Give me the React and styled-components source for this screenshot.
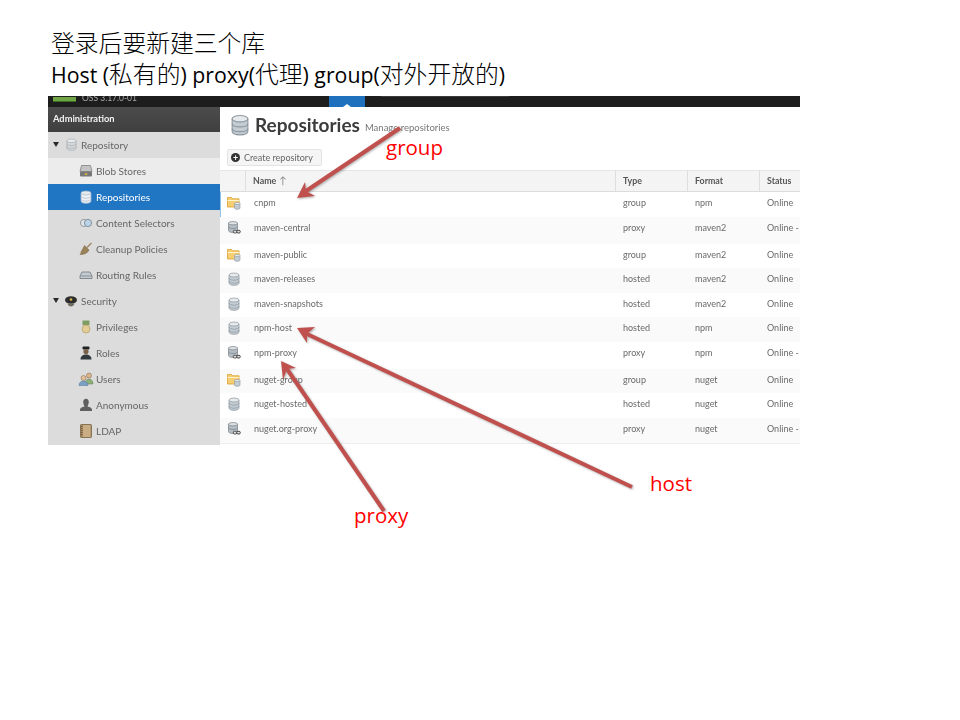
import React from "react";
import styled, { createGlobalStyle } from "styled-components";

const GlobalStyle = createGlobalStyle`
  html, body {
    margin: 0;
    padding: 0;
    background: #fff;
  }
`;

const sideItems = [
  { label: "Repository", icon: "db", group: true },
  { label: "Blob Stores", icon: "blob", tone: "light" },
  { label: "Repositories", icon: "dbWhite", tone: "active" },
  { label: "Content Selectors", icon: "selector" },
  { label: "Cleanup Policies", icon: "broom" },
  { label: "Routing Rules", icon: "routing" },
  { label: "Security", icon: "hat", group: true },
  { label: "Privileges", icon: "medal" },
  { label: "Roles", icon: "officer" },
  { label: "Users", icon: "users" },
  { label: "Anonymous", icon: "person" },
  { label: "LDAP", icon: "book" },
];

const repos = [
  { name: "cnpm", type: "group", format: "npm", status: "Online", h: 25, selected: true },
  { name: "maven-central", type: "proxy", format: "maven2", status: "Online - Remote Available", h: 27 },
  { name: "maven-public", type: "group", format: "maven2", status: "Online", h: 24 },
  { name: "maven-releases", type: "hosted", format: "maven2", status: "Online", h: 25 },
  { name: "maven-snapshots", type: "hosted", format: "maven2", status: "Online", h: 24 },
  { name: "npm-host", type: "hosted", format: "npm", status: "Online", h: 25 },
  { name: "npm-proxy", type: "proxy", format: "npm", status: "Online - Remote Available", h: 27 },
  { name: "nuget-group", type: "group", format: "nuget", status: "Online", h: 24 },
  { name: "nuget-hosted", type: "hosted", format: "nuget", status: "Online", h: 25 },
  { name: "nuget.org-proxy", type: "proxy", format: "nuget", status: "Online - Remote Available", h: 26 },
];

// shaft start, then the stealth head: tip, wing, notch, wing
const arrows = [
  { from: "400,128", to: "306,191", head: "297,198 315,196 306,191 305,182" },
  { from: "632,487", to: "307,334", head: "297,328 315,327 307,334 307,343" },
  { from: "384,511", to: "287,369", head: "281,361 296,368 287,369 283,380" },
];

const Cylinder = ({ size = 14, fill = "#c3ccd3", line = "#8d979f" }) => (
  <svg width={size} height={size} viewBox="0 0 14 14">
    <path d="M2 3v8c0 1.4 2.2 2.3 5 2.3s5-.9 5-2.3V3z" fill={fill} stroke={line} strokeWidth=".7" />
    <ellipse cx="7" cy="3" rx="5" ry="2" fill="#e6eaed" stroke={line} strokeWidth=".7" />
    <path d="M2 6c0 1.3 2.2 2.2 5 2.2s5-.9 5-2.200M2 9c0 1.3 2.2 2.2 5 2.2s5-.9 5-2.200" fill="none" stroke={line} strokeWidth=".7" />
  </svg>
);

const FolderDb = () => (
  <svg width="14" height="14" viewBox="0 0 14 14">
    <path d="M.5 1.500h4l1 1.300h6.500v8.200H.5z" fill="#f6cf72" stroke="#d9a02f" strokeWidth=".8" />
    <path d="M.5 4.500h11.500" stroke="#fff3cf" strokeWidth="1" />
    <path d="M7.500 7.500v4.500c0 .8 1 1.300 2.700 1.300s2.800-.5 2.800-1.300V7.500z" fill="#c3ccd3" stroke="#8d979f" strokeWidth=".6" />
    <ellipse cx="10.250" cy="7.500" rx="2.750" ry="1.100" fill="#e6eaed" stroke="#8d979f" strokeWidth=".6" />
  </svg>
);

const ProxyDb = () => (
  <svg width="14" height="14" viewBox="0 0 14 14">
    <path d="M1.500 2v7.500c0 1.200 1.800 2 4.500 2s4.500-.8 4.500-2V2z" fill="#b4bdc4" stroke="#7a838a" strokeWidth=".7" />
    <ellipse cx="6" cy="2.200" rx="4.500" ry="1.700" fill="#dde1e4" stroke="#7a838a" strokeWidth=".7" />
    <path d="M1.500 5.500c0 1.200 1.800 2 4.500 2s4.500-.8 4.500-2" fill="none" stroke="#7a838a" strokeWidth=".7" />
    <rect x="6.300" y="9.300" width="3.500" height="2.700" rx="1.200" fill="#ddd" stroke="#3c3c3c" strokeWidth=".9" />
    <rect x="9.800" y="9.300" width="3.500" height="2.700" rx="1.200" fill="#ddd" stroke="#3c3c3c" strokeWidth=".9" />
  </svg>
);

const SideGlyph = ({ kind }) => {
  switch (kind) {
    case "db":
      return <Cylinder size={13} fill="#d5d8da" line="#a5aaae" />;
    case "dbWhite":
      return <Cylinder size={14} fill="#f0f2f4" line="#9fb6cd" />;
    case "blob":
      return (
        <svg width="14" height="14" viewBox="0 0 14 14">
          <path d="M2.500 1.500h9l1.500 6H1z" fill="#c4c4c4" stroke="#777" strokeWidth=".7" />
          <rect x="1" y="7.500" width="12" height="5" rx="1" fill="#777" />
          <rect x="5.800" y="9.300" width="2.500" height="1.600" fill="#e7b53c" />
        </svg>
      );
    case "selector":
      return (
        <svg width="14" height="14" viewBox="0 0 14 14">
          <circle cx="5" cy="7" r="3.600" fill="#dfe3e6" stroke="#8e969c" strokeWidth=".9" />
          <circle cx="9" cy="7" r="3.600" fill="#bcd3e8" stroke="#7a8a98" strokeWidth=".9" />
        </svg>
      );
    case "broom":
      return (
        <svg width="14" height="14" viewBox="0 0 14 14">
          <path d="M8 5.500 12.500 1" stroke="#a08a66" strokeWidth="1.500" />
          <path d="M5.500 3.500 10 8c-1 2.500-4 4.500-9 4.500 1.500-1 .5-2 1.500-3.500C3.500 7.500 4.500 5.500 5.500 3.500z" fill="#9b8258" stroke="#75613f" strokeWidth=".5" />
        </svg>
      );
    case "routing":
      return (
        <svg width="14" height="14" viewBox="0 0 14 14">
          <path d="M3 4h8l2 4v2.500H1V8z" fill="#c5ccd2" stroke="#6f777d" strokeWidth=".8" />
          <path d="M1.500 8h11" stroke="#6f777d" strokeWidth=".7" />
        </svg>
      );
    case "hat":
      return (
        <svg width="14" height="14" viewBox="0 0 14 14">
          <ellipse cx="7" cy="6" rx="6" ry="3.800" fill="#2e2e2e" />
          <circle cx="7" cy="5.500" r="1.300" fill="#d7b94a" />
          <path d="M3.500 9.500h7c-.5 2-2 3-3.500 3s-3-1-3.500-3z" fill="#6f6a60" />
        </svg>
      );
    case "medal":
      return (
        <svg width="14" height="14" viewBox="0 0 14 14">
          <rect x="3.500" y="0.500" width="7" height="4.500" fill="#7f9c63" />
          <circle cx="7" cy="9" r="4" fill="#e2cd97" stroke="#b79f60" strokeWidth=".7" />
        </svg>
      );
    case "officer":
      return (
        <svg width="14" height="14" viewBox="0 0 14 14">
          <rect x="3.500" y="0.500" width="7" height="3" rx="1" fill="#1f2326" />
          <circle cx="7" cy="5.500" r="2.600" fill="#7c6248" />
          <path d="M1.500 13.500c0-3.500 2.500-5 5.500-5s5.500 1.500 5.500 5z" fill="#33383c" />
        </svg>
      );
    case "users":
      return (
        <svg width="16" height="14" viewBox="0 0 16 14">
          <circle cx="11" cy="3.500" r="2.500" fill="#d9b48d" stroke="#80654a" strokeWidth=".5" />
          <path d="M7 12c0-3.500 2-5 4-5s4 1.500 4 5z" fill="#8fb07a" stroke="#5f7a4f" strokeWidth=".5" />
          <circle cx="5.500" cy="6" r="2.500" fill="#e2bf98" stroke="#80654a" strokeWidth=".5" />
          <path d="M1 13.500c0-3 2-4.500 4.500-4.500S10 10.500 10 13.500z" fill="#7ba0c4" stroke="#4f7396" strokeWidth=".5" />
        </svg>
      );
    case "person":
      return (
        <svg width="14" height="14" viewBox="0 0 14 14">
          <path d="M7 .8c1.800 0 2.800 1.300 2.800 3.200S8.800 7.500 8.500 8.500c2 .6 4.500 1.300 4.500 3V13H1v-1.500c0-1.700 2.500-2.400 4.500-3C5.200 7.500 4.200 5.900 4.200 4S5.200.8 7 .8z" fill="#5f5f5f" />
        </svg>
      );
    default:
      return (
        <svg width="14" height="14" viewBox="0 0 14 14">
          <rect x="1.500" y="0.500" width="11" height="13" rx=".8" fill="#a98a62" stroke="#6f5837" strokeWidth=".7" />
          <rect x="4" y="1" width="7.500" height="12" fill="#c9ad85" />
          <path d="M2.800 2v10" stroke="#5d4a2e" strokeWidth="1" strokeDasharray="1 1" />
        </svg>
      );
  }
};

const RepoGlyph = ({ type }) => {
  if (type === "group") return <FolderDb />;
  if (type === "proxy") return <ProxyDb />;
  return <Cylinder />;
};

const App = () => (
  <Page>
    <GlobalStyle />
    <Heading>
      <HeadingLine><Cjk>登录后要新建三个库</Cjk></HeadingLine>
      <HeadingLine>
        Host (<Cjk>私有的</Cjk>) proxy(<Cjk>代理</Cjk>) group(<Cjk>对外开放的</Cjk>)
      </HeadingLine>
    </Heading>

    <Shot>
      <TopBar>
        <Logo />
        <Version>OSS 3.17.0-01</Version>
        <AdminTab />
        <SearchBox />
      </TopBar>
      <ShotBody>
        <Sidebar>
          <SidebarTitle>Administration</SidebarTitle>
          <SideList>
            {sideItems.map((item) => (
              <SideRow key={item.label} $group={item.group} $tone={item.tone}>
                {item.group && <Caret />}
                <SideIcon><SideGlyph kind={item.icon} /></SideIcon>
                <span>{item.label}</span>
              </SideRow>
            ))}
          </SideList>
        </Sidebar>

        <Content>
          <TitleRow>
            <Cylinder size={22} />
            <Title>Repositories</Title>
            <Subtitle>Manage repositories</Subtitle>
          </TitleRow>
          <CreateButton>
            <PlusDot>+</PlusDot>
            Create repository
          </CreateButton>
          <HeaderRow>
            <HeaderCell />
            <HeaderCell>Name <SortArrow>↑</SortArrow></HeaderCell>
            <HeaderCell>Type</HeaderCell>
            <HeaderCell>Format</HeaderCell>
            <HeaderCell>Status</HeaderCell>
          </HeaderRow>
          {repos.map((repo, i) => (
            <RepoRow key={repo.name} $height={repo.h} $striped={i % 2 === 1} $selected={repo.selected}>
              <IconCell><RepoGlyph type={repo.type} /></IconCell>
              <NameCell>{repo.name}</NameCell>
              <Cell>{repo.type}</Cell>
              <Cell>{repo.format}</Cell>
              <Cell>{repo.status}</Cell>
            </RepoRow>
          ))}
        </Content>
      </ShotBody>
    </Shot>

    <Overlay width="960" height="720" viewBox="0 0 960 720">
      {arrows.map((a) => {
        const [x1, y1] = a.from.split(",");
        const [x2, y2] = a.to.split(",");
        return (
          <g key={a.from}>
            <line x1={x1} y1={y1} x2={x2} y2={y2} stroke="#c0504d" strokeWidth="4" />
            <polygon points={a.head} fill="#c0504d" />
          </g>
        );
      })}
    </Overlay>
    <Note $x={386} $y={133}>group</Note>
    <Note $x={650} $y={469}>host</Note>
    <Note $x={354} $y={501}>proxy</Note>
  </Page>
);

export default App;

const Page = styled.div`
  position: relative;
  width: 960px;
  height: 720px;
  box-sizing: border-box;
  padding: 26px 0 0 48px;
  background: #fff;
  overflow: hidden;
`;

const Heading = styled.div`
  padding-left: 3px;
  margin-bottom: 8px;
  color: #000;
  font-family: "Open Sans", "Noto Sans CJK SC", sans-serif;
  font-size: 21.300px;
`;

const HeadingLine = styled.div`
  height: 31px;
  line-height: 31px;
  white-space: nowrap;
`;

const Cjk = styled.span`
  font-family: "Noto Sans CJK SC", sans-serif;
  font-size: 23.800px;
  font-weight: 300;
`;

const Shot = styled.div`
  width: 752px;
  height: 349px;
  display: flex;
  flex-direction: column;
  overflow: hidden;
  font-family: Lato, "Open Sans", sans-serif;
  font-size: 9px;
  filter: blur(0.45px);
`;

const TopBar = styled.div`
  position: relative;
  flex: 0 0 11px;
  display: flex;
  align-items: flex-end;
  padding: 0 0 5px 5px;
  box-sizing: border-box;
  background: #1d1d1d;
  overflow: hidden;
`;

const Logo = styled.div`
  width: 23px;
  height: 5px;
  background: #6fa544;
  border-bottom: 1px solid #3f6d26;
  box-sizing: border-box;
`;

const Version = styled.div`
  margin-left: 6px;
  color: #a9a9a9;
  font-size: 8.500px;
  line-height: 8px;
`;

const AdminTab = styled.div`
  position: absolute;
  left: 281px;
  top: 0;
  width: 36px;
  height: 11px;
  background: #1f70bd;
  &::after {
    content: "";
    position: absolute;
    left: 14px;
    bottom: 0;
    border-left: 4px solid transparent;
    border-right: 4px solid transparent;
    border-bottom: 3px solid #fff;
  }
`;

const SearchBox = styled.div`
  position: absolute;
  left: 332px;
  top: -8px;
  width: 130px;
  height: 9px;
  border-radius: 2px;
  background: #3a3a3a;
`;

const ShotBody = styled.div`
  flex: 1;
  display: flex;
  min-height: 0;
`;

const Sidebar = styled.div`
  flex: 0 0 172px;
  display: flex;
  flex-direction: column;
  background: #dcdcdc;
`;

const SidebarTitle = styled.div`
  height: 25px;
  display: flex;
  align-items: center;
  padding: 0 0 2px 5px;
  box-sizing: border-box;
  background: linear-gradient(#4c4c4c, #3f3f3f);
  color: #f2f2f2;
  font-size: 9.300px;
  font-weight: 700;
`;

const SideList = styled.div`
  display: flex;
  flex-direction: column;
`;

const sideBackground = { light: "#ececec", active: "#2176c4" };

const SideRow = styled.div`
  height: 26px;
  display: flex;
  align-items: center;
  gap: 1px;
  padding: 0 0 1px ${(p) => (p.$group ? "5px" : "30px")};
  box-sizing: border-box;
  background: ${(p) => sideBackground[p.$tone] || "transparent"};
  color: ${(p) => (p.$tone === "active" ? "#fff" : "#666")};
  font-size: 10px;
  white-space: nowrap;
`;

const Caret = styled.span`
  width: 0;
  height: 0;
  margin-right: 3px;
  border-left: 3.500px solid transparent;
  border-right: 3.500px solid transparent;
  border-top: 5px solid #2a2a2a;
`;

const SideIcon = styled.span`
  width: 16px;
  display: inline-flex;
  justify-content: center;
  margin-right: 1px;
`;

const Content = styled.div`
  flex: 1;
  min-width: 0;
  background: #fff;
`;

const TitleRow = styled.div`
  height: 38px;
  display: flex;
  align-items: center;
  padding: 0 0 3px 9px;
  box-sizing: border-box;
`;

const Title = styled.div`
  margin-left: 4px;
  color: #3c3c3c;
  font-size: 19px;
  font-weight: 700;
`;

const Subtitle = styled.div`
  margin: 6px 0 0 5px;
  color: #777;
  font-size: 9.500px;
`;

const CreateButton = styled.div`
  width: 95px;
  height: 17px;
  margin: 4px 0 4px 7px;
  display: flex;
  align-items: center;
  gap: 4px;
  padding-left: 3px;
  box-sizing: border-box;
  background: #f5f5f5;
  border: 1px solid #e4e4e4;
  border-radius: 2px;
  color: #666;
  font-size: 9px;
`;

const PlusDot = styled.span`
  width: 9px;
  height: 9px;
  display: inline-flex;
  align-items: center;
  justify-content: center;
  border-radius: 50%;
  background: #333;
  color: #fff;
  font-size: 9px;
  font-weight: 700;
  line-height: 9px;
`;

const columns = "26px 370px 72px 72px 220px";

const HeaderRow = styled.div`
  display: grid;
  grid-template-columns: ${columns};
  height: 22px;
  background: #f4f4f4;
  border-top: 1px solid #e6e6e6;
  border-bottom: 1px solid #dcdcdc;
  box-sizing: border-box;
`;

const HeaderCell = styled.div`
  display: flex;
  align-items: center;
  gap: 3px;
  padding: 0 0 2px 7px;
  border-right: 1px solid #dedede;
  color: #555;
  font-size: 8.800px;
  font-weight: 700;
`;

const SortArrow = styled.span`
  color: #888;
  font-size: 10px;
  font-weight: 400;
`;

const RepoRow = styled.div`
  display: grid;
  grid-template-columns: ${columns};
  height: ${(p) => p.$height}px;
  align-items: start;
  background: ${(p) => (p.$striped ? "#fafafa" : "#fff")};
  box-shadow: ${(p) => (p.$selected ? "inset 1px 0 0 #8fc0e8" : "none")};
  border-bottom: ${(p) => (p.$height === 26 ? "1px solid #eee" : "none")};
  box-sizing: border-box;
`;

const IconCell = styled.div`
  display: flex;
  padding: 4px 0 0 7px;
`;

const Cell = styled.div`
  padding: 4px 0 0 7px;
  color: #6a6a6a;
  font-size: 9px;
  line-height: 13px;
  white-space: nowrap;
`;

const NameCell = styled(Cell)`
  padding-left: 8px;
`;

const Overlay = styled.svg`
  position: absolute;
  left: 0;
  top: 0;
  pointer-events: none;
  filter: drop-shadow(1px 1px 1px rgba(0, 0, 0, 0.3));
`;

const Note = styled.div`
  position: absolute;
  left: ${(p) => p.$x}px;
  top: ${(p) => p.$y}px;
  color: #f00;
  font-family: "Open Sans", sans-serif;
  font-size: 20.500px;
  line-height: 28px;
`;
